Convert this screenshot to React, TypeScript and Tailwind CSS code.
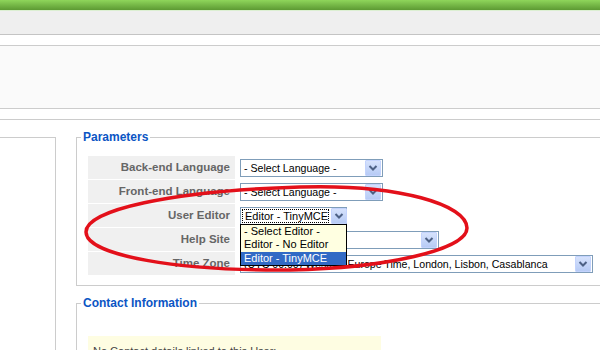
import React from "react";

const font = { fontFamily: '"Liberation Sans", Arial, sans-serif' };

function Arrow() {
  return (
    <div className="w-[16px] h-[16px] mr-[1px] shrink-0 flex items-center justify-center border border-[#c3d3fd] bg-gradient-to-b from-[#d6e2fc] to-[#b7cbf5] rounded-[1px]">
      <svg width="10" height="8" viewBox="0 0 10 8">
        <path d="M1.5 2 L5 5.5 L8.5 2" fill="none" stroke="#4d6185" strokeWidth="2" />
      </svg>
    </div>
  );
}

function FakeSelect({
  value,
  width,
  focused,
}: {
  value: string;
  width: string;
  focused?: boolean;
}) {
  return (
    <div className={`${width} h-[18px] border border-[#7f9db9] bg-white flex items-center justify-between`}>
      {focused ? (
        <span className="ml-[1px] mr-[2px] flex-1 h-[14px] border border-dotted border-black pl-[2px] text-[11px] leading-[12px] text-black whitespace-nowrap">
          {value}
        </span>
      ) : (
        <span className="pl-[3px] text-[10.6px] leading-[14px] text-black whitespace-nowrap">{value}</span>
      )}
      <Arrow />
    </div>
  );
}

function Row({ label, children }: { label: string; children: React.ReactNode }) {
  return (
    <div className="flex h-[23px]">
      <div className="w-[147px] bg-[#f0f0f0] flex items-center justify-end pr-[5px] text-[11.5px] font-bold text-[#666666]">
        {label}
      </div>
      <div className="flex items-center pl-[5px]">{children}</div>
    </div>
  );
}

function EditorSelect() {
  return (
    <div className="relative">
      <FakeSelect value="Editor - TinyMCE" width="w-[107px]" focused />
      <div className="absolute left-0 top-[17px] z-10 w-[107px] border border-black bg-[#ffffe1] text-[11px] text-black">
        <div className="h-[13.5px] leading-[13px] pl-[3px]">- Select Editor -</div>
        <div className="h-[13.5px] leading-[13px] pl-[3px]">Editor - No Editor</div>
        <div className="h-[13.5px] leading-[13px] pl-[3px] bg-[#316ac5] text-white">Editor - TinyMCE</div>
      </div>
    </div>
  );
}

export default function App() {
  return (
    <div className="relative w-[600px] h-[350px] overflow-hidden bg-white" style={font}>
      <div className="h-[10px] bg-gradient-to-b from-[#8fd65b] to-[#5d9a33]" />
      <div className="h-[25px] bg-[#efefef] border-t border-[#dcefd2] border-b border-b-[#c4c4c4]" />
      <div className="h-[11px] bg-white border-b border-[#cccccc]" />
      <div className="h-[63px] bg-[#fafafa] border-b border-[#cccccc]" />
      <div className="h-[11px] bg-white border-b border-[#cccccc]" />

      <div className="flex">
        <div className="mt-[17px] w-[56px] shrink-0 h-[300px] border-t border-r border-[#cccccc]" />

        <div className="ml-[20px] w-[560px] shrink-0">
          <fieldset className="mt-[10px] border border-[#cccccc] px-[4px] pb-[10px]">
            <legend className="px-[2px] text-[12px] leading-[14px] font-bold text-[#0b55c4]">Parameters</legend>
            <div className="mt-[12px] pl-[7px] flex flex-col gap-[1px]">
              <Row label="Back-end Language">
                <FakeSelect value="- Select Language -" width="w-[143px]" />
              </Row>
              <Row label="Front-end Language">
                <FakeSelect value="- Select Language -" width="w-[143px]" />
              </Row>
              <Row label="User Editor">
                <EditorSelect />
              </Row>
              <Row label="Help Site">
                <FakeSelect value="" width="w-[199px]" />
              </Row>
              <Row label="Time Zone">
                <FakeSelect
                  value="(UTC 00:00) Western Europe Time, London, Lisbon, Casablanca"
                  width="w-[353px]"
                />
              </Row>
            </div>
          </fieldset>

          <fieldset className="mt-[10px] border border-[#cccccc] px-[4px] pb-[20px]">
            <legend className="px-[2px] text-[12px] leading-[14px] font-bold text-[#0b55c4]">
              Contact Information
            </legend>
            <div className="mt-[26px] ml-[7px] w-[293px] h-[30px] bg-[#fefde2] pl-[5px] pt-[7px] text-[11px] text-[#444444]">
              No Contact details linked to this User:
            </div>
          </fieldset>
        </div>
      </div>

      <svg
        className="absolute left-0 top-0 z-20 pointer-events-none"
        width="600"
        height="350"
        viewBox="0 0 600 350"
      >
        <path
          d="M300 187 C400 184 467 205 467 228 C467 250 385 268 290 270 C180 271 86 256 86 232 C86 210 170 191 300 187 Z"
          fill="none"
          stroke="#e3101a"
          strokeWidth="3.5"
        />
      </svg>
    </div>
  );
}
